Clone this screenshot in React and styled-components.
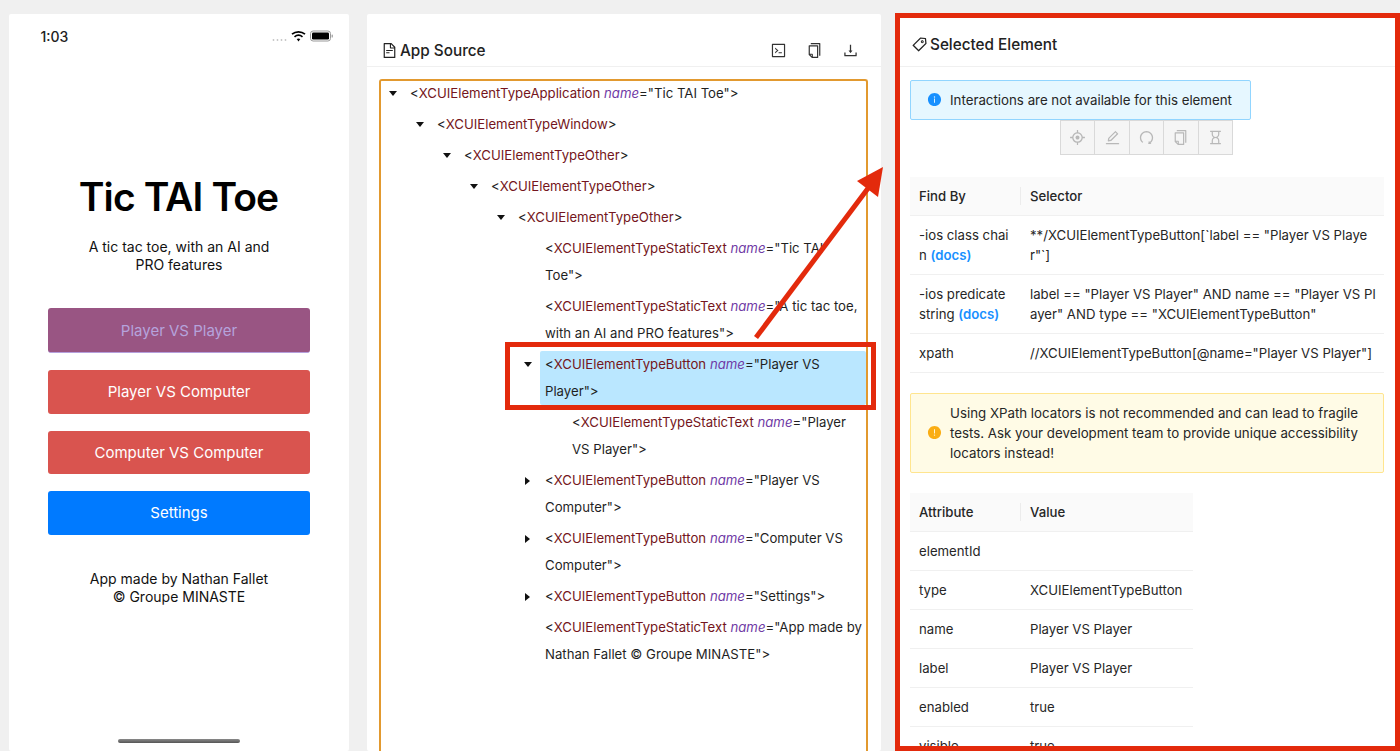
import React from "react";
import styled, { createGlobalStyle } from "styled-components";
import {
  AiOutlineFileText,
  AiOutlineCode,
  AiOutlineCopy,
  AiOutlineDownload,
  AiOutlineTag,
  AiFillInfoCircle,
  AiFillExclamationCircle,
  AiOutlineAim,
  AiOutlineEdit,
  AiOutlineRedo,
  AiOutlineHourglass,
} from "react-icons/ai";

const GlobalStyle = createGlobalStyle`
  html, body {
    margin: 0;
    height: 751px;
    overflow: hidden;
    background: #f0f0f0;
    font-family: Inter, "Liberation Sans", sans-serif;
    color: #1f1f1f;
  }
`;

const Page = styled.div`
  position: relative;
  display: grid;
  grid-template-columns: 340px 514px 501px;
  column-gap: 18px;
  height: 751px;
  padding: 13px 0 0 9px;
  box-sizing: border-box;
  overflow: hidden;
`;

/* Phone */

const Phone = styled.section`
  display: flex;
  flex-direction: column;
  align-items: center;
  margin-top: 1px;
  background: #fff;
  border-radius: 2px;
`;

const StatusBar = styled.div`
  display: flex;
  justify-content: space-between;
  align-items: center;
  align-self: stretch;
  padding: 13px 15px 0 31.5px;
  height: 18px;
`;

const Clock = styled.span`
  font-size: 14px;
  font-weight: 500;
  color: #222;
`;

const Heading = styled.h1`
  margin: 128px 1px 0 0;
  font-size: 39px;
  line-height: 48px;
  font-weight: 600;
  letter-spacing: -0.9px;
  color: #000;
`;

const Blurb = styled.p`
  margin: 17px 0 0;
  width: 200px;
  text-align: center;
  font-size: 14px;
  line-height: 18px;
  color: #111;
`;

const ButtonStack = styled.div`
  display: flex;
  flex-direction: column;
  gap: 17px;
  width: 262px;
  margin-top: 34px;
`;

const GameButton = styled.button`
  height: ${({ $active }) => ($active ? "45px" : "43.5px")};
  padding: 0;
  border: 0;
  border-bottom: ${({ $active }) => ($active ? "1px solid #b5a0dd" : "0")};
  border-radius: 3px;
  background: ${({ $tone }) => $tone};
  color: ${({ $active }) => ($active ? "#b5a3dc" : "#fff")};
  font-family: inherit;
  font-size: 15px;
`;

const Credit = styled.p`
  margin: 35px 0 0;
  text-align: center;
  font-size: 14px;
  line-height: 18px;
  color: #111;
`;

const HomeBar = styled.div`
  width: 122px;
  height: 4px;
  margin: auto 0 8px;
  border-radius: 2px;
  background: linear-gradient(#8a8a8a, #555);
`;

/* Source panel */

const Card = styled.section`
  display: flex;
  flex-direction: column;
  margin-top: 1px;
  min-height: 0;
  background: #fff;
  border-radius: 2px;
`;

const CardHead = styled.header`
  display: flex;
  align-items: center;
  justify-content: space-between;
  height: 53px;
  padding: 20px 22px 0 14px;
  box-sizing: border-box;
  border-bottom: 1px solid #f0f0f0;
`;

const CardTitle = styled.h2`
  display: flex;
  align-items: center;
  gap: 2px;
  margin: 0;
  font-size: 15.3px;
  font-weight: 500;
  color: #222;
  svg {
    font-size: 17px;
  }
`;

const HeadTools = styled.div`
  display: flex;
  gap: 19px;
  font-size: 17px;
  color: #333;
  svg {
    display: block;
  }
`;

const TreeBox = styled.div`
  flex: 1;
  margin: 12px 13px 0 12px;
  border: 2px solid #e2992f;
  border-bottom: 0;
  border-radius: 3px 3px 0 0;
`;

const TreeList = styled.div`
  margin-top: -1px;
`;

const TreeRow = styled.div`
  display: flex;
  align-items: flex-start;
  padding-left: ${({ $level }) => $level * 27}px;
  margin-bottom: 4px;
`;

const Switcher = styled.span`
  flex: 0 0 24px;
  box-sizing: border-box;
  padding-right: 1px;
  display: flex;
  justify-content: center;
  align-items: center;
  height: 27px;
`;

const CaretDown = styled.i`
  border-style: solid;
  border-width: 5px 4px 0;
  border-color: #111 transparent transparent;
`;

const CaretRight = styled.i`
  border-style: solid;
  border-width: 4px 0 4px 5px;
  border-color: transparent transparent transparent #111;
`;

const NodeTitle = styled.span`
  flex: 1;
  padding: 0 3px 0 5px;
  font-size: 13.2px;
  line-height: 27px;
  color: #1f1f1f;
  background: ${({ $selected }) => ($selected ? "#bae7ff" : "transparent")};
  border-radius: 2px;
`;

const TagName = styled.span`
  color: #741520;
`;

const AttrName = styled.em`
  color: #6f3aa5;
`;

/* Selected element panel */

const Inspector = styled.section`
  display: flex;
  flex-direction: column;
  background: #fff;
  border: 5px solid #e32a0c;
  box-sizing: border-box;
  height: 738px;
  margin-left: -4px;
  overflow: hidden;
`;

const InspectorHead = styled.header`
  display: flex;
  align-items: center;
  flex: 0 0 49px;
  padding: 4px 10px 0 11px;
  box-sizing: border-box;
  border-bottom: 1px solid #f0f0f0;
`;

const InspectorBody = styled.div`
  padding: 13px 11px 0 10px;
`;

const Notice = styled.div`
  display: flex;
  align-items: center;
  gap: 8px;
  width: ${({ $wide }) => ($wide ? "auto" : "fit-content")};
  padding: 8.5px 18px 9.5px 16px;
  border: 1px solid ${({ $warn }) => ($warn ? "#ffe58f" : "#91d5ff")};
  border-radius: 2px;
  background: ${({ $warn }) => ($warn ? "#fffbe6" : "#e6f7ff")};
  font-size: 13.3px;
  line-height: 20px;
  color: #262626;
  box-sizing: border-box;
  margin-top: ${({ $warn }) => ($warn ? "20px" : "0")};
  svg {
    flex: 0 0 15px;
    width: 15px;
    height: 15px;
    color: ${({ $warn }) => ($warn ? "#faad14" : "#1890ff")};
  }
`;

const ActionGroup = styled.div`
  display: flex;
  width: fit-content;
  margin: 0 0 22px 151px;
`;

const ActionButton = styled.button`
  display: flex;
  align-items: center;
  justify-content: center;
  width: 35.4px;
  height: 35px;
  padding: 0;
  margin-left: -1px;
  border: 1px solid #d9d9d9;
  background: #f5f5f5;
  color: #b8b8b8;
  font-size: 17px;
`;

const Table = styled.table`
  width: ${({ $narrow }) => ($narrow ? "283px" : "100%")};
  table-layout: fixed;
  border-collapse: collapse;
  font-size: 13.2px;
  line-height: 20px;
  color: #262626;
  margin-top: ${({ $spaced }) => ($spaced ? "20px" : "0")};
`;

const HeadCell = styled.th`
  position: relative;
  padding: 9px 9px;
  background: #fafafa;
  border-bottom: 1px solid #f0f0f0;
  font-weight: 500;
  text-align: left;
  &:first-child {
    width: 93px;
  }
  &:first-child::after {
    content: "";
    position: absolute;
    top: 10px;
    bottom: 10px;
    right: 0;
    width: 1px;
    background: #ececec;
  }
`;

const Cell = styled.td`
  padding: 9px 8px 9px 9px;
  border-bottom: 1px solid #f0f0f0;
  word-break: break-all;
  vertical-align: top;
`;

const DocsLink = styled.a`
  color: #1890ff;
  font-weight: 600;
`;

/* Annotations drawn over the screenshot */

const SelectionFrame = styled.div`
  position: absolute;
  left: 505px;
  top: 342px;
  width: 371px;
  height: 68px;
  box-sizing: border-box;
  border: 5px solid #e32a0c;
  pointer-events: none;
`;

const ArrowLayer = styled.svg`
  position: absolute;
  left: 0;
  top: 0;
  pointer-events: none;
`;

const tree = [
  { level: 0, open: true, tag: "XCUIElementTypeApplication", name: "Tic TAI Toe" },
  { level: 1, open: true, tag: "XCUIElementTypeWindow" },
  { level: 2, open: true, tag: "XCUIElementTypeOther" },
  { level: 3, open: true, tag: "XCUIElementTypeOther" },
  { level: 4, open: true, tag: "XCUIElementTypeOther" },
  { level: 5, tag: "XCUIElementTypeStaticText", name: "Tic TAI Toe" },
  { level: 5, tag: "XCUIElementTypeStaticText", name: "A tic tac toe, with an AI and PRO features" },
  { level: 5, open: true, selected: true, tag: "XCUIElementTypeButton", name: "Player VS Player" },
  { level: 6, tag: "XCUIElementTypeStaticText", name: "Player VS Player" },
  { level: 5, closed: true, tag: "XCUIElementTypeButton", name: "Player VS Computer" },
  { level: 5, closed: true, tag: "XCUIElementTypeButton", name: "Computer VS Computer" },
  { level: 5, closed: true, tag: "XCUIElementTypeButton", name: "Settings" },
  { level: 5, tag: "XCUIElementTypeStaticText", name: "App made by Nathan Fallet © Groupe MINASTE" },
];

const attributes = [
  ["elementId", ""],
  ["type", "XCUIElementTypeButton"],
  ["name", "Player VS Player"],
  ["label", "Player VS Player"],
  ["enabled", "true"],
  ["visible", "true"],
];

function StatusIcons() {
  return (
    <svg width="62" height="14" viewBox="0 0 62 14">
      <g fill="#c4c4c4">
        <circle cx="1.5" cy="11" r="0.9" />
        <circle cx="5.5" cy="11" r="0.9" />
        <circle cx="9.5" cy="11" r="0.9" />
        <circle cx="13.5" cy="11" r="0.9" />
      </g>
      <g fill="none" stroke="#000" strokeWidth="1.7">
        <path d="M20 5.2a10 10 0 0 1 13 0" />
        <path d="M22.5 7.8a6.4 6.4 0 0 1 8 0" />
      </g>
      <path d="M24.7 10.1a3 3 0 0 1 3.6 0L26.5 12.6z" fill="#000" />
      <rect x="38.5" y="2" width="20" height="10" rx="2.6" fill="none" stroke="#999" />
      <rect x="40" y="3.5" width="17" height="7" rx="1.3" fill="#000" />
      <rect x="59.6" y="5.5" width="1.2" height="3" rx="0.6" fill="#999" />
    </svg>
  );
}

function TreeNode({ node }) {
  return (
    <TreeRow $level={node.level}>
      <Switcher>
        {node.open && <CaretDown />}
        {node.closed && <CaretRight />}
      </Switcher>
      <NodeTitle $selected={node.selected}>
        &lt;<TagName>{node.tag}</TagName>
        {node.name && (
          <>
            {" "}
            <AttrName>name</AttrName>="{node.name}"
          </>
        )}
        &gt;
      </NodeTitle>
    </TreeRow>
  );
}

export default function App() {
  return (
    <>
      <GlobalStyle />
      <Page>
        <Phone>
          <StatusBar>
            <Clock>1:03</Clock>
            <StatusIcons />
          </StatusBar>
          <Heading>Tic TAI Toe</Heading>
          <Blurb>A tic tac toe, with an AI and PRO features</Blurb>
          <ButtonStack>
            <GameButton $active $tone="#995583">Player VS Player</GameButton>
            <GameButton $tone="#d9544f">Player VS Computer</GameButton>
            <GameButton $tone="#d9544f">Computer VS Computer</GameButton>
            <GameButton $tone="#007aff">Settings</GameButton>
          </ButtonStack>
          <Credit>
            App made by Nathan Fallet
            <br />© Groupe MINASTE
          </Credit>
          <HomeBar />
        </Phone>

        <Card>
          <CardHead>
            <CardTitle>
              <AiOutlineFileText />
              App Source
            </CardTitle>
            <HeadTools>
              <AiOutlineCode />
              <AiOutlineCopy />
              <AiOutlineDownload />
            </HeadTools>
          </CardHead>
          <TreeBox>
            <TreeList>
              {tree.map((node, i) => (
                <TreeNode key={i} node={node} />
              ))}
            </TreeList>
          </TreeBox>
        </Card>

        <Inspector>
          <InspectorHead>
            <CardTitle>
              <AiOutlineTag />
              Selected Element
            </CardTitle>
          </InspectorHead>
          <InspectorBody>
            <Notice>
              <AiFillInfoCircle />
              Interactions are not available for this element
            </Notice>
            <ActionGroup>
              <ActionButton><AiOutlineAim /></ActionButton>
              <ActionButton><AiOutlineEdit /></ActionButton>
              <ActionButton><AiOutlineRedo /></ActionButton>
              <ActionButton><AiOutlineCopy /></ActionButton>
              <ActionButton><AiOutlineHourglass /></ActionButton>
            </ActionGroup>
            <Table>
              <thead>
                <tr>
                  <HeadCell>Find By</HeadCell>
                  <HeadCell>Selector</HeadCell>
                </tr>
              </thead>
              <tbody>
                <tr>
                  <Cell>-ios class chain <DocsLink>(docs)</DocsLink></Cell>
                  <Cell>**/XCUIElementTypeButton[`label == "Player VS Player"`]</Cell>
                </tr>
                <tr>
                  <Cell>-ios predicate string <DocsLink>(docs)</DocsLink></Cell>
                  <Cell>label == "Player VS Player" AND name == "Player VS Player" AND type == "XCUIElementTypeButton"</Cell>
                </tr>
                <tr>
                  <Cell>xpath</Cell>
                  <Cell>//XCUIElementTypeButton[@name="Player VS Player"]</Cell>
                </tr>
              </tbody>
            </Table>
            <Notice $warn $wide>
              <AiFillExclamationCircle />
              Using XPath locators is not recommended and can lead to fragile tests. Ask your development team to provide unique accessibility locators instead!
            </Notice>
            <Table $narrow $spaced>
              <thead>
                <tr>
                  <HeadCell>Attribute</HeadCell>
                  <HeadCell>Value</HeadCell>
                </tr>
              </thead>
              <tbody>
                {attributes.map(([key, value]) => (
                  <tr key={key}>
                    <Cell>{key}</Cell>
                    <Cell>{value}</Cell>
                  </tr>
                ))}
              </tbody>
            </Table>
          </InspectorBody>
        </Inspector>

        <SelectionFrame />
        <ArrowLayer width="1400" height="751" viewBox="0 0 1400 751">
          <path d="M756 337.5L869 187" stroke="#e32a0c" strokeWidth="5" fill="none" />
          <path d="M883 167L857 181L878 197z" fill="#e32a0c" />
        </ArrowLayer>
      </Page>
    </>
  );
}
